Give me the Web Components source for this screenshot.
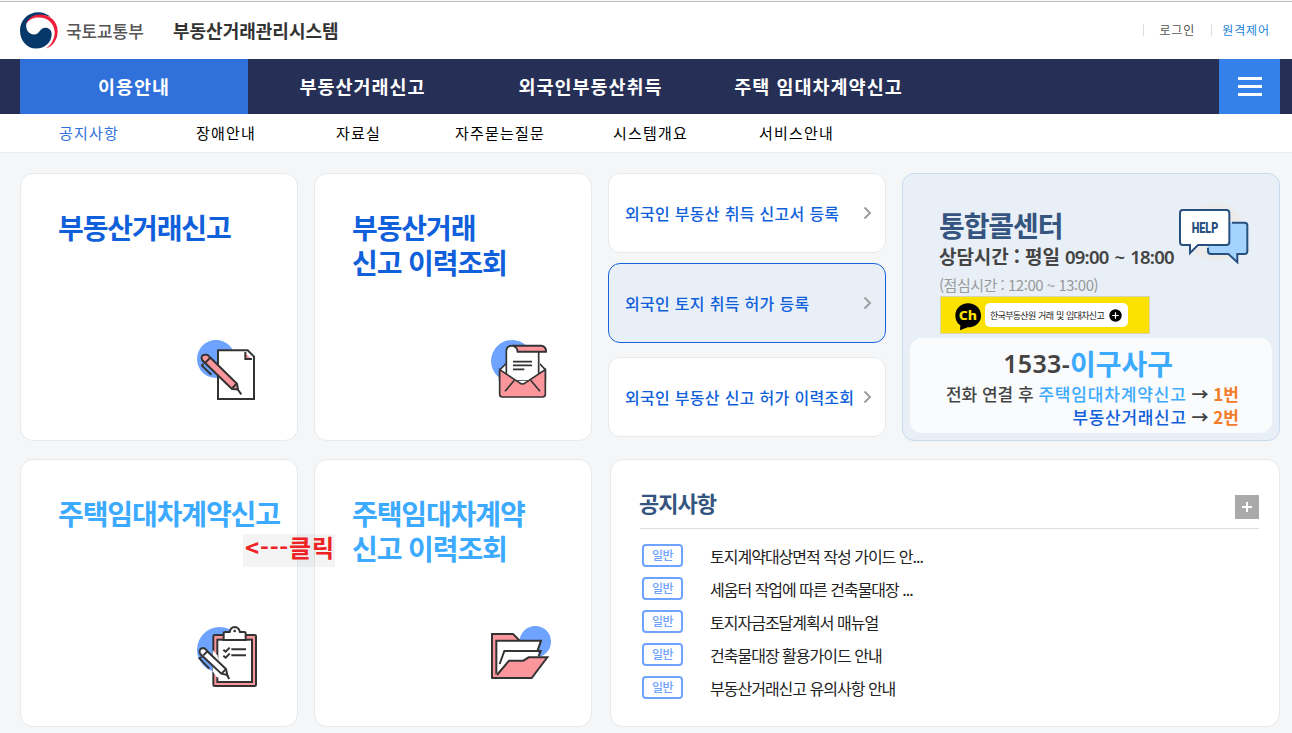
<!DOCTYPE html>
<html lang="ko">
<head>
<meta charset="utf-8">
<title>부동산거래관리시스템</title>
<style>
  * { box-sizing: border-box; }
  body {
    margin: 0;
    width: 1292px;
    height: 733px;
    overflow: hidden;
    background: #f5f6f8;
    font-family: "Noto Sans CJK KR", sans-serif;
    color: #222;
  }
  main {
    display: grid;
    grid-template-columns: 278px 278px 278px 378px;
    grid-template-rows: 268px 268px;
    column-gap: 16px;
    row-gap: 18px;
    padding: 20px 12px 6px 20px;
  }
  .links { display: flex; flex-direction: column; }
  .links link-card + link-card { margin-top: 10px; }
  .links link-card:last-child { margin-top: 14px; }
  notice-board { grid-column: 3 / 5; margin-left: 2px; }
</style>
</head>
<body>
<site-header>
  <span slot="ministry">국토교통부</span>
  <span slot="title">부동산거래관리시스템</span>
  <span slot="login">로그인</span>
  <span slot="remote">원격제어</span>
</site-header>
<main-nav>
  <nav-tab active>이용안내</nav-tab>
  <nav-tab>부동산거래신고</nav-tab>
  <nav-tab>외국인부동산취득</nav-tab>
  <nav-tab>주택 임대차계약신고</nav-tab>
</main-nav>
<sub-nav>
  <span class="on">공지사항</span>
  <span>장애안내</span>
  <span>자료실</span>
  <span>자주묻는질문</span>
  <span>시스템개요</span>
  <span>서비스안내</span>
</sub-nav>
<main>
  <service-card icon="report">부동산거래신고</service-card>
  <service-card icon="letter">부동산거래<br>신고 이력조회</service-card>
  <div class="links">
    <link-card>외국인 부동산 취득 신고서 등록</link-card>
    <link-card active>외국인 토지 취득 허가 등록</link-card>
    <link-card>외국인 부동산 신고 허가 이력조회</link-card>
  </div>
  <call-center></call-center>
  <service-card icon="checklist" light>주택임대차계약신고</service-card>
  <service-card icon="folder" light>주택임대차계약<br>신고 이력조회</service-card>
  <notice-board>
    <notice-item>토지계약대상면적 작성 가이드 안...</notice-item>
    <notice-item>세움터 작업에 따른 건축물대장 ...</notice-item>
    <notice-item>토지자금조달계획서 매뉴얼</notice-item>
    <notice-item>건축물대장 활용가이드 안내</notice-item>
    <notice-item>부동산거래신고 유의사항 안내</notice-item>
  </notice-board>
</main>
<click-note>&lt;---클릭</click-note>

<script>
class BaseElement extends HTMLElement {
  constructor() {
    super();
    const template = document.createElement('template');
    template.innerHTML = `<style>* { box-sizing: border-box; }</style>` + this.render();
    this.attachShadow({ mode: 'open' }).append(template.content.cloneNode(true));
  }
}

customElements.define('site-header', class extends BaseElement {
  render() {
    return `
    <style>
      :host {
        display: flex;
        align-items: center;
        height: 59px;
        padding: 2px 22px 0 20px;
        background: linear-gradient(#f8f8f8 1px, #bdbdbd 1px, #bdbdbd 2px, #fff 2px);
        white-space: nowrap;
      }
      svg { width: 38px; height: 37px; }
      .ministry { margin-left: 8px; width: 107px; font-size: 17px; letter-spacing: -0.1px; color: #555; font-weight: 500; }
      .title { margin-top: -2px; font-size: 18px; font-weight: 700; color: #333; flex: 1; }
      .user { display: flex; align-items: center; font-size: 12px; margin-top: -2px; }
      .user i { width: 1px; height: 12px; background: #ddd; }
      .login { margin: 0 16px 0 15px; color: #555; letter-spacing: 0.9px; }
      .remote { margin-left: 10px; color: #1b84d8; letter-spacing: 0.9px; }
    </style>
    <svg viewBox="60 38 114 110">
      <path d="M152 52C141 43 128 38 115 38C84 38 60 62 60 93C60 124 81 147 108 147C136 147 155 127 155 104C155 92 147 85 136 85C119 85 120 105 102 105C86 105 76 90 79 73C86 50 120 40 152 52Z" fill="#06386a"/>
      <path d="M79 74C84 54 103 45 122 45C152 46 173 67 173 96C173 121 158 141 138 147C153 136 164 119 164 98C163 72 143 54 117 54C100 53 86 60 79 74Z" fill="#ef1f3c"/>
    </svg>
    <div class="ministry"><slot name="ministry"></slot></div>
    <div class="title"><slot name="title"></slot></div>
    <div class="user">
      <i></i><span class="login"><slot name="login"></slot></span>
      <i></i><span class="remote"><slot name="remote"></slot></span>
    </div>`;
  }
});

customElements.define('main-nav', class extends BaseElement {
  render() {
    return `
    <style>
      :host { display: flex; height: 55px; padding: 0 12px 0 20px; background: #262f55; }
      .tabs { display: flex; flex: 1; }
      button {
        width: 61px;
        border: 0;
        padding: 0 18px 0 19px;
        background: #3381e9;
        display: flex;
        flex-direction: column;
        justify-content: center;
        gap: 5px;
      }
      button i { width: 24px; height: 3px; background: #fff; }
    </style>
    <div class="tabs"><slot></slot></div>
    <button><i></i><i></i><i></i></button>`;
  }
});

customElements.define('nav-tab', class extends BaseElement {
  render() {
    return `
    <style>
      :host {
        display: block;
        width: 228px;
        line-height: 55px;
        text-align: center;
        font-size: 18.5px;
        font-weight: 700;
        letter-spacing: 1px;
        color: #fff;
      }
      :host(:not([active])) { padding-left: 1px; }
      :host([active]) { background: #3070db; }
    </style>
    <slot></slot>`;
  }
});

customElements.define('sub-nav', class extends BaseElement {
  render() {
    return `
    <style>
      :host {
        display: grid;
        grid-template-columns: 137px 140px 119px 158px 146px auto;
        height: 39px;
        padding-left: 59px;
        background: #fff;
        border-bottom: 1px solid #ebecee;
        font-size: 15px;
        line-height: 37px;
        letter-spacing: 1.2px;
        color: #000;
        white-space: nowrap;
      }
      ::slotted(.on) { color: #3070db; }
    </style>
    <slot></slot>`;
  }
});

const INK = '#333';
const ICONS = {
  report: `<svg viewBox="48 27 186 189">
    <circle cx="108" cy="87" r="57" fill="#6ea3ff"/>
    <path d="M114 61H203L222 80V207H114Z" fill="#fff" stroke="${INK}" stroke-width="6"/>
    <path d="M196 69V87H214Z" fill="#fb979c"/><path d="M196 66V87H216" fill="none" stroke="${INK}" stroke-width="6"/>
    <path d="M67 91C61 82 66 74 75 74C81 73 86 77 90 82L171 161L174 178L156 177Z" fill="#fb979c" stroke="${INK}" stroke-width="6"/>
    <path d="M90 84L76 98M169 162L157 174M172 177L184 193" stroke="${INK}" stroke-width="6"/>
    <path d="M70 101L66 107L94 134" fill="none" stroke="${INK}" stroke-width="6"/>
  </svg>`,
  letter: `<svg viewBox="30 27 186 189">
    <circle cx="96" cy="93" r="63" fill="#6ea3ff"/>
    <path d="M59 120L80 99H177L196 119V150H59Z" fill="#fff" stroke="${INK}" stroke-width="5"/>
    <path d="M79 150V62Q80 47 97 47H180V150Z" fill="#fff"/>
    <path d="M79 133V62Q80 47 97 47H184Q199 50 198 65H113Q112 49 97 47" fill="none" stroke="${INK}" stroke-width="5"/>
    <path d="M99 48H184Q198 50 198 65H113Q112 51 99 48Z" fill="#fb979c" stroke="${INK}" stroke-width="5"/>
    <path d="M176 66V134" stroke="${INK}" stroke-width="5"/>
    <path d="M99 95H156M99 106H156M99 118H133" stroke="${INK}" stroke-width="5"/>
    <path d="M59 119L118 158Q127 166 137 158L196 119V193Q196 201 187 201H67Q59 201 59 193Z" fill="#fb979c" stroke="${INK}" stroke-width="5"/>
    <path d="M103 151L75 184M152 151L180 184" stroke="${INK}" stroke-width="5"/>
  </svg>`,
  checklist: `<svg viewBox="48 75 186 189">
    <circle cx="119" cy="149" r="68" fill="#6ea3ff"/>
    <rect x="100" y="105" width="128" height="153" rx="4" fill="#fb979c" stroke="${INK}" stroke-width="6"/>
    <rect x="112" y="119" width="104" height="127" fill="#fff" stroke="${INK}" stroke-width="6"/>
    <path d="M131 120V100Q131 96 136 96H149Q151 82 164 81Q177 82 180 96H192Q197 96 197 100V120Z" fill="#fff" stroke="${INK}" stroke-width="6"/>
    <circle cx="164" cy="93" r="4" fill="${INK}"/>
    <path d="M154 148H198M154 166H198M130 149L137 155L149 143M130 167L137 173L149 161" fill="none" stroke="${INK}" stroke-width="6"/>
    <path d="M98 150L112 166L128 222L112 233L98 214Z" fill="#fff"/>
    <path d="M61 162C55 153 60 145 69 144C76 144 79 149 82 154L138 207L142 225L124 221Z" fill="#fff" stroke="${INK}" stroke-width="6"/>
    <path d="M83 153L70 166M137 208L125 220M139 222L148 237M65 171L58 175L88 206" fill="none" stroke="${INK}" stroke-width="6"/>
  </svg>`,
  folder: `<svg viewBox="30 75 186 189">
    <circle cx="166" cy="125" r="47" fill="#6ea3ff"/>
    <path d="M36 233V102H99L119 122V233Z" fill="#fb979c" stroke="${INK}" stroke-width="6"/>
    <path d="M50 122H183L172 153L181 171L120 205L50 223Z" fill="#fff"/>
    <path d="M49 224V122H183L173 151" fill="none" stroke="${INK}" stroke-width="6"/>
    <path d="M59 192L73 153H182L176 169" fill="none" stroke="${INK}" stroke-width="6"/>
    <path d="M36 234L88 182H129L146 172H201L155 234Z" fill="#fb979c"/>
    <path d="M36 234H155L202 172H146L130 182H87L51 225" fill="none" stroke="${INK}" stroke-width="6"/>
  </svg>`,
};

customElements.define('service-card', class extends BaseElement {
  render() {
    return `
    <style>
      :host {
        display: block;
        background: #fff;
        border: 1px solid #e7e9eb;
        border-radius: 13px;
        padding: 36px 0 0 37px;
      }
      .title {
        height: 129px;
        font-size: 28px;
        line-height: 35px;
        letter-spacing: -1.1px;
        font-weight: 700;
        color: #105fdb;
        white-space: nowrap;
      }
      :host([light]) .title { color: #3caaff; }
      .icon { margin-left: 138px; }
      svg { display: block; width: 62px; height: 63px; }
    </style>
    <div class="title"><slot></slot></div>
    <div class="icon">${ICONS[this.getAttribute('icon')]}</div>`;
  }
});

customElements.define('link-card', class extends BaseElement {
  render() {
    return `
    <style>
      :host {
        display: flex;
        align-items: center;
        justify-content: space-between;
        height: 80px;
        padding: 0 13px 0 16px;
        background: #fff;
        border: 1px solid #e7e9eb;
        border-radius: 12px;
        font-size: 16px;
        font-weight: 500;
        letter-spacing: 0.25px;
        word-spacing: 0.2px;
        color: #105fdb;
        white-space: nowrap;
      }
      :host([active]) { background: #e8eff7; border-color: #1862dc; }
      svg { width: 9px; height: 14px; }
    </style>
    <span><slot></slot></span>
    <svg viewBox="0 0 9 14"><path d="M1.5 1.5L7 7L1.5 12.5" fill="none" stroke="#9e9e9e" stroke-width="2"/></svg>`;
  }
});

customElements.define('call-center', class extends BaseElement {
  render() {
    return `
    <style>
      :host {
        display: block;
        padding: 33px 7px 0;
        background: #e8eff7;
        border: 1px solid #c9daed;
        border-radius: 12px;
        color: #444;
        white-space: nowrap;
      }
      .head { display: flex; height: 89px; padding-left: 29px; }
      .text { width: 239px; }
      h2 { margin: 0; font-size: 28px; line-height: 36px; letter-spacing: -1.1px; color: #35547f; }
      .time { height: 27px; font-size: 19px; line-height: 26px; font-weight: 700; letter-spacing: -0.1px; }
      .time b { font-family: "Noto Sans", sans-serif; font-weight: 650; font-size: 18.5px; line-height: 1; letter-spacing: -0.8px; word-spacing: 2px; }
      .lunch { margin-top: 2px; font-size: 15px; line-height: 26px; color: #999; letter-spacing: -0.48px; }
      .help { width: 72px; height: 64px; margin-top: -6px; }
      .banner {
        display: flex;
        align-items: center;
        width: 210px;
        height: 38px;
        margin-left: 30px;
        padding-left: 13px;
        background: #fbe100;
        border: 1px solid #d9d4b5;
      }
      .banner > svg { width: 28px; height: 29px; margin-top: 2px; }
      .pill {
        display: flex;
        align-items: center;
        justify-content: space-between;
        width: 143px;
        height: 24px;
        margin-left: 3px;
        padding: 0 6px 0 5px;
        border-radius: 5px;
        background: #fff;
        font-size: 9px;
        letter-spacing: -0.7px;
        word-spacing: 0.8px;
        color: #222;
      }
      .pill svg { width: 13px; height: 13px; }
      .panel {
        height: 95px;
        margin-top: 4px;
        padding: 7px 33px 0 0;
        border-radius: 12px;
        background: #f9fbfd;
        text-align: right;
        font-size: 17px;
        line-height: 23px;
        font-weight: 500;
      }
      .tel { height: 37px; line-height: 37px; padding-right: 66px; font-size: 28px; font-weight: 700; letter-spacing: -0.2px; }
      .tel b { font-family: "Noto Sans", sans-serif; font-size: 25px; font-weight: 650; letter-spacing: 0.3px; vertical-align: 2px; line-height: 1; }
      .sky { color: #3caaff; letter-spacing: 0.85px; }
      .tel .sky { letter-spacing: 0; }
      .blue { color: #105fdb; letter-spacing: 0.7px; }
      .arrow { font-weight: 700; }
      .num { color: #f47b2a; font-weight: 700; }
    </style>
    <div class="head">
      <div class="text">
        <h2>통합콜센터</h2>
        <div class="time">상담시간 : 평일 <b>09:00 ~ 18:00</b></div>
        <div class="lunch">(점심시간 : 12:00 ~ 13:00)</div>
      </div>
      <svg class="help" viewBox="834 108 216 192">
        <circle cx="945" cy="200" r="87" fill="#ecebea"/>
        <path d="M931 172H1034Q1042 172 1042 181V259Q1042 267 1034 267H1012V292L985 267H933Q924 267 924 258V172Z" fill="#a4d3ff"/>
        <path d="M996 173H1034Q1042 173 1042 181V259Q1042 267 1034 267H1012V292L985 267H933Q924 267 924 258V248" fill="none" stroke="#28507f" stroke-width="6"/>
        <path d="M848 135H979Q988 135 988 144V231Q988 240 979 240H894L870 264V240H848Q840 240 840 231V144Q840 135 848 135Z" fill="#fff" stroke="#28507f" stroke-width="6"/>
        <text x="875" y="204" textLength="80" lengthAdjust="spacingAndGlyphs" font-family="Roboto" font-weight="900" font-size="45" fill="#28507f">HELP</text>
      </svg>
    </div>
    <div class="banner">
      <svg viewBox="162 408 84 87">
        <path d="M204 412C184 412 166 427 166 449C166 462 172 472 181 478L180 493L203 484C227 484 243 469 243 449C243 427 226 412 204 412Z" fill="#000"/>
        <text x="176" y="462" textLength="55" lengthAdjust="spacingAndGlyphs" font-family="Noto Sans" font-weight="800" font-size="37" fill="#fbe100">Ch</text>
      </svg>
      <div class="pill">한국부동산원 거래 및 임대차신고
        <svg viewBox="0 0 13 13"><circle cx="6.5" cy="6.5" r="6.2"/><path d="M6.5 3.2V9.8M3.2 6.5H9.8" stroke="#fff" stroke-width="1.2"/></svg>
      </div>
    </div>
    <div class="panel">
      <div class="tel"><b>1533-</b><span class="sky">이구사구</span></div>
      <div>전화 연결 후 <span class="sky">주택임대차계약신고</span> <span class="arrow">→</span> <span class="num">1번</span></div>
      <div><span class="blue">부동산거래신고</span> <span class="arrow">→</span> <span class="num">2번</span></div>
    </div>`;
  }
});

customElements.define('notice-board', class extends BaseElement {
  render() {
    return `
    <style>
      :host {
        display: block;
        padding: 25px 20px 0 29px;
        background: #fff;
        border: 1px solid #e7e9eb;
        border-radius: 13px;
      }
      header {
        display: flex;
        align-items: center;
        justify-content: space-between;
        height: 44px;
        border-bottom: 1px solid #ddd;
      }
      h3 { margin: -9px 0 0 -1px; font-size: 22px; line-height: 34px; letter-spacing: -1px; font-weight: 700; color: #35547f; }
      svg { width: 24px; height: 24px; }
      .list { padding: 10px 0 0 2px; }
    </style>
    <header>
      <h3>공지사항</h3>
      <svg viewBox="0 0 24 24"><path d="M0 0H24V24H0Z" fill="#aaa"/><path d="M12 7V17M7 12H17" stroke="#fff" stroke-width="2"/></svg>
    </header>
    <div class="list"><slot></slot></div>`;
  }
});

customElements.define('notice-item', class extends BaseElement {
  render() {
    return `
    <style>
      :host { display: flex; align-items: center; height: 33px; white-space: nowrap; }
      .badge {
        width: 41px;
        height: 23px;
        margin-top: -1px;
        border: 2px solid #6ea3ff;
        border-radius: 4px;
        text-align: center;
        font-size: 12px;
        line-height: 18px;
        font-weight: 500;
        letter-spacing: -0.6px;
        color: #6ea3ff;
      }
      .text { margin: 2px 0 0 27px; font-size: 16px; line-height: 31px; letter-spacing: -1px; color: #222; }
    </style>
    <span class="badge">일반</span>
    <span class="text"><slot></slot></span>`;
  }
});

// floating hint over the two bottom cards
customElements.define('click-note', class extends BaseElement {
  render() {
    return `
    <style>
      :host {
        position: absolute;
        left: 243px;
        top: 534px;
        width: 92px;
        height: 33px;
        padding-left: 2px;
        background: rgba(0, 0, 0, 0.045);
        color: #ee2222;
        font-size: 24px;
        line-height: 26px;
        font-weight: 700;
        letter-spacing: 0.8px;
        white-space: nowrap;
      }
    </style>
    <slot></slot>`;
  }
});
</script>
</body>
</html>
